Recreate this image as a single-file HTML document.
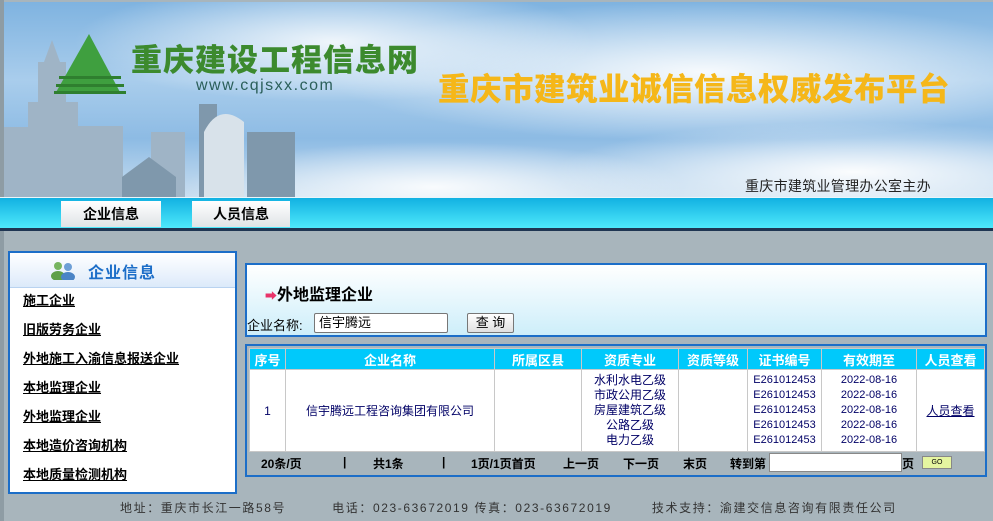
<!DOCTYPE html>
<html><head><meta charset="utf-8"><style>
*{margin:0;padding:0;box-sizing:border-box}
body{width:993px;height:521px;overflow:hidden;background:#a8b5bc;font-family:"Liberation Sans","Noto Sans CJK SC",sans-serif;position:relative}
.abs{position:absolute}
#hdr{left:4px;top:2px;width:989px;height:195px;overflow:hidden;
background:
radial-gradient(ellipse 260px 60px at 330px 40px,rgba(255,255,255,.85),rgba(255,255,255,0)),
radial-gradient(ellipse 380px 70px at 700px 70px,rgba(255,255,255,.9),rgba(255,255,255,0)),
radial-gradient(ellipse 300px 50px at 850px 170px,rgba(255,255,255,.95),rgba(255,255,255,0)),
radial-gradient(ellipse 250px 45px at 430px 185px,rgba(255,255,255,.9),rgba(255,255,255,0)),
linear-gradient(180deg,#7fb3e0 0%,#a9cdec 40%,#8dbbe4 70%,#c9def0 100%)}
#lside{left:0;top:0;width:4px;height:521px;background:#8e9ca4}
.nav{left:0;top:197px;width:993px;height:31px;background:linear-gradient(#12b1e2,#4ee9fb);border-top:1px solid #eaf6fb}
.navb{left:0;top:228px;width:993px;height:3px;background:#1f3552}
.tab{top:201px;height:26px;background:linear-gradient(#fff,#dfe3e6);font-weight:bold;font-size:14px;text-align:center;line-height:26px;color:#000}
.panel{background:#fff;border:2px solid #1c6ec8}
.menu a{display:block;color:#000;font-weight:bold;font-size:13px;text-decoration:underline;height:29px;line-height:25px;padding-left:13px}
table{border-collapse:collapse;font-size:12px}
td,th{border:1px solid #c8c8c8;text-align:center}
th{background:#00c9fb;color:#fff;font-size:13px;height:21px}
td{color:#000066}
</style></head><body>
<div id="lside" class="abs"></div>
<div id="hdr" class="abs">
<svg class="abs" style="left:0;top:0" width="989" height="195">
<g fill="#9fb4c6"><rect x="24" y="100" width="50" height="95"/><rect x="34" y="60" width="28" height="50"/><polygon points="40,60 56,60 48,38"/><rect x="0" y="125" width="24" height="70"/><rect x="74" y="124" width="45" height="71"/><rect x="147" y="130" width="34" height="65"/></g>
<g fill="#7f98ac"><polygon points="118,175 145,155 172,175 172,195 118,195"/><rect x="195" y="102" width="18" height="93"/><rect x="243" y="130" width="48" height="65"/></g>
<g fill="#d8e2ea"><path d="M200 195 L200 130 Q215 100 240 120 L240 195 Z"/></g>
<polygon points="85,32 117,92 51,92" fill="#3f9f3f"/>
<g fill="#2f7f2f"><rect x="55" y="74" width="62" height="3"/><rect x="52" y="82" width="68" height="3"/><rect x="50" y="89" width="72" height="3"/></g>
<text x="127" y="69" font-family="Noto Sans CJK SC" font-weight="900" font-size="31" fill="#3c8a2e" letter-spacing="1">重庆建设工程信息网</text>
<text x="192" y="88" font-family="Liberation Sans" font-size="16" fill="#2b5f5a" letter-spacing="1.5">www.cqjsxx.com</text>
<text x="434" y="98" font-family="Noto Sans CJK SC" font-weight="900" font-size="31.5" fill="#f5b719" letter-spacing="0.5">重庆市建筑业诚信信息权威发布平台</text>
<text x="741" y="189" font-family="Noto Sans CJK SC" font-size="14" fill="#222" letter-spacing="0.3">重庆市建筑业管理办公室主办</text>
</svg>
</div>
<div class="nav abs"></div><div class="navb abs"></div>
<div class="tab abs" style="left:61px;width:100px">企业信息</div>
<div class="tab abs" style="left:192px;width:98px">人员信息</div>

<div class="panel abs" style="left:8px;top:251px;width:229px;height:243px">
<div style="height:35px;background:linear-gradient(#fff,#dceafa);border-bottom:1px solid #b9d3f0;position:relative">
<svg class="abs" style="left:40px;top:7px" width="26" height="20"><circle cx="8" cy="6" r="4" fill="#77b560"/><ellipse cx="8" cy="16" rx="7" ry="5" fill="#5fa048"/><circle cx="18" cy="7" r="4" fill="#6d9fd6"/><ellipse cx="18" cy="17" rx="7" ry="5" fill="#4a84c6"/></svg>
<div class="abs" style="left:78px;top:6px;font-size:16px;font-weight:bold;color:#1c6ec8;letter-spacing:1px">企业信息</div>
</div>
<div class="menu" style="padding-top:0">
<a>施工企业</a><a>旧版劳务企业</a><a>外地施工入渝信息报送企业</a><a>本地监理企业</a><a>外地监理企业</a><a>本地造价咨询机构</a><a>本地质量检测机构</a>
</div></div>

<div class="panel abs" style="left:245px;top:263px;width:742px;height:74px;background:linear-gradient(#fff,#cdeefa)">
<div class="abs" style="left:18px;top:16px;font-size:16px;font-weight:bold;color:#000"><span style="color:#e8336a;font-size:12px">➡</span>外地监理企业</div>
<div class="abs" style="left:0;top:50px;font-size:13px">企业名称:</div>
<div class="abs" style="left:67px;top:48px;width:134px;height:20px;border:1px solid #777;border-radius:2px;background:#fff;font-size:13px;line-height:18px;padding-left:4px">信宇腾远</div>
<div class="abs" style="left:220px;top:48px;width:47px;height:20px;border:1px solid #777;border-radius:2px;background:linear-gradient(#fff,#e0e0e0);font-size:13px;line-height:18px;text-align:center">查 询</div>
</div>

<div class="panel abs" style="left:245px;top:344px;width:742px;height:133px;background:#a8b5bc;padding:2px">
<table style="width:736px;background:#fff">
<tr><th style="width:36px">序号</th><th style="width:209px">企业名称</th><th style="width:87px">所属区县</th><th style="width:97px">资质专业</th><th style="width:69px">资质等级</th><th style="width:74px">证书编号</th><th style="width:95px">有效期至</th><th>人员查看</th></tr>
<tr style="height:82px"><td>1</td><td>信宇腾远工程咨询集团有限公司</td><td></td><td style="line-height:15px">水利水电乙级<br>市政公用乙级<br>房屋建筑乙级<br>公路乙级<br>电力乙级</td><td></td><td style="line-height:15px;font-size:11px">E261012453<br>E261012453<br>E261012453<br>E261012453<br>E261012453</td><td style="line-height:15px;font-size:11px">2022-08-16<br>2022-08-16<br>2022-08-16<br>2022-08-16<br>2022-08-16</td><td><u>人员查看</u></td></tr>
</table>
<div style="position:relative;height:22px;font-size:12px;font-weight:bold;color:#000">
<span class="abs" style="left:12px;top:3px">20条/页</span>
<span class="abs" style="left:94px;top:3px">|</span>
<span class="abs" style="left:124px;top:3px">共1条</span>
<span class="abs" style="left:193px;top:3px">|</span>
<span class="abs" style="left:222px;top:3px">1页/1页首页</span>
<span class="abs" style="left:314px;top:3px">上一页</span>
<span class="abs" style="left:374px;top:3px">下一页</span>
<span class="abs" style="left:434px;top:3px">末页</span>
<span class="abs" style="left:481px;top:3px">转到第</span>
<span class="abs" style="left:520px;top:1px;width:133px;height:19px;background:#fff;border:1px solid #888"></span>
<span class="abs" style="left:653px;top:3px">页</span>
<span class="abs" style="left:673px;top:4px;width:30px;height:13px;background:#e5f5a0;border:1px solid #888;font-size:7px;line-height:11px;text-align:center;font-weight:normal">GO</span>
</div>
</div>

<div class="abs" style="left:120px;top:499px;font-size:12px;color:#333;letter-spacing:1.6px;white-space:nowrap">地址：重庆市长江一路58号<span style="display:inline-block;width:46px"></span>电话：023-63672019 传真：023-63672019<span style="display:inline-block;width:40px"></span>技术支持：渝建交信息咨询有限责任公司</div>
</body></html>
